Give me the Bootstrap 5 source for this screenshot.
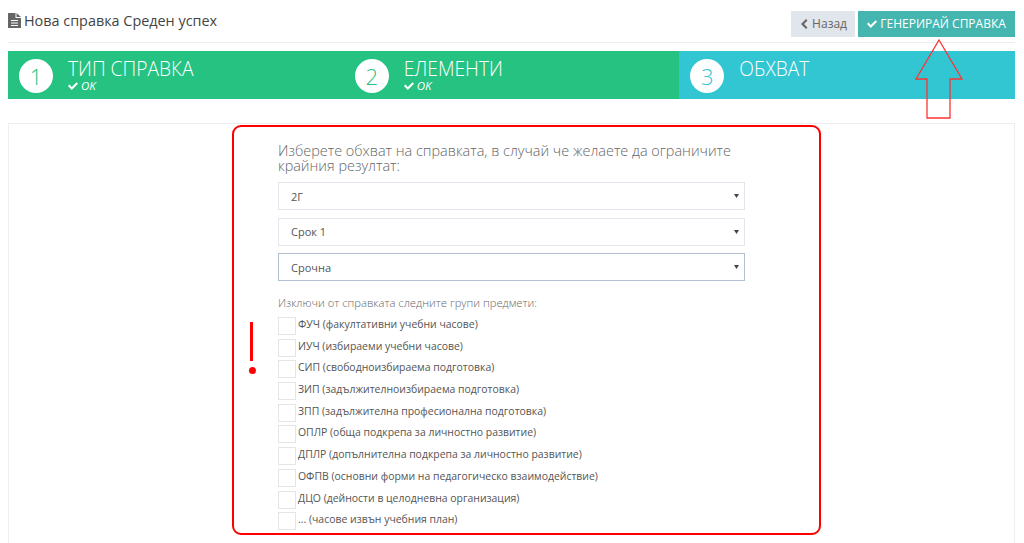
<!DOCTYPE html>
<html lang="bg">
<head>
    <meta charset="UTF-8">
    <meta name="viewport" content="width=device-width, initial-scale=1.0">
    <title>Нова справка</title>
    <link href="https://cdn.jsdelivr.net/npm/bootstrap@5.3.0/dist/css/bootstrap.min.css" rel="stylesheet">
    <style>
        html, body { height: 543px; overflow: hidden; }
        body {
            font-family: "Open Sans", "Noto Sans", sans-serif;
            font-size: 11px;
            color: #555;
            background-color: #fff;
            padding: 0 9px 0 8px;
            position: relative;
        }
        .page-head {
            height: 43px;
            border-bottom: 1px solid #eee;
            padding-top: 11px;
        }
        .page-title {
            font-size: 14.4px;
            font-weight: 400;
            color: #444;
            margin: 0;
            line-height: 20px;
        }
        .page-title svg { width: 13px; height: 15px; fill: #666; margin-right: 3px; vertical-align: -2px; }
        .btn-back, .btn-make {
            border-radius: 0;
            border: 0;
            font-size: 12px;
            height: 26px;
            padding: 0;
            line-height: 26px;
            white-space: nowrap;
        }
        .btn-back { background-color: #e1e5ec; color: #666; width: 64px; margin-right: 3px; }
        .btn-make { background-color: #45b6af; color: #fff; width: 157px; }
        .btn-back svg, .btn-make svg { width: 10px; height: 10px; fill: currentColor; vertical-align: -1px; }
        .steps { margin-top: 8px; height: 48px; color: #fff; }
        .step-item { flex: 1 1 0; background-color: #26c281; padding: 8px 0 0 11px; gap: 15px; }
        .step-item.step-now { background-color: #32c5d2; }
        .step-num {
            width: 34px;
            height: 34px;
            border-radius: 50%;
            background-color: #fff;
            color: #26c281;
            font-size: 22px;
            font-weight: 300;
            line-height: 34px;
            text-align: center;
            flex: none;
        }
        .step-now .step-num { color: #32c5d2; }
        .step-name { font-size: 19.2px; font-weight: 300; line-height: 20px; }
        .step-ok { font-size: 11.5px; font-style: italic; line-height: 11px; padding-top: 1px; }
        .step-ok svg { width: 10px; height: 9px; fill: #fff; vertical-align: -1px; }
        .panel-box {
            margin-top: 24px;
            border: 1px solid #eee;
            height: 600px;
            padding-top: 1px;
        }
        .red-box {
            position: relative;
            width: 589px;
            height: 410px;
            margin-left: 223px;
            border: 2px solid #f00;
            border-radius: 9px;
            padding: 16px 0 0 44px;
        }
        .form-inner { width: 467px; }
        .form-lead {
            font-size: 14.45px;
            font-weight: 300;
            line-height: 15px;
            color: #666;
            margin-bottom: 9px;
        }
        .pick {
            height: 28px;
            border-radius: 0;
            border: 1px solid #e1e5ec;
            font-size: 11px;
            color: #555;
            padding: 2px 12px 0;
            margin-bottom: 7.5px;
            background-size: 5px 4px;
            background-position: right 5px center;
            background-image: url("data:image/svg+xml,%3Csvg xmlns='http://www.w3.org/2000/svg' viewBox='0 0 5 4'%3E%3Cpath fill='%23444' d='M0 0h5L2.500 4z'/%3E%3C/svg%3E");
        }
        .pick.pick-on { border-color: #b3bfd3; }
        .exclude-title { font-size: 11.25px; font-weight: 300; color: #666; margin: 14px 0 6px; line-height: 16px; }
        .ex-row { height: 21.7px; min-height: 0; margin: 0; padding: 0; gap: 2px; align-items: flex-start; }
        .ex-row .form-check-input {
            width: 18px;
            height: 18px;
            border-radius: 0;
            border: 1px solid #e5e5e5;
            margin: 0;
            float: none;
            flex: none;
        }
        .ex-row label { line-height: 15px; color: #555; font-size: 10.45px; }
        .warn-bar { position: absolute; left: 16px; top: 195px; width: 3px; height: 39px; background-color: #f00; }
        .warn-dot { position: absolute; left: 15px; top: 240px; width: 7px; height: 7px; border-radius: 50%; background-color: #f00; }
        .up-arrow { position: absolute; left: 915px; top: 39px; width: 49px; height: 81px; }
    </style>
</head>
<body>

<div class="page-head d-flex justify-content-between align-items-start">
    <h1 class="page-title">
        <svg viewBox="0 0 13 15"><path d="M0 0h7.500v5H13v10H0zM8.500 0L13 4H8.500zM3 7v1h7V7zM3 9.500v1h7v-1zM3 12v1h7v-1z" fill-rule="evenodd"/></svg>Нова справка Среден успех
    </h1>
    <div class="d-flex">
        <button class="btn btn-back"><svg viewBox="0 0 10 10"><path d="M7 0l1.500 1.500L5 5l3.500 3.500L7 10 2 5z"/></svg> Назад</button>
        <button class="btn btn-make"><svg viewBox="0 0 10 10"><path d="M1.400 3.600L3.800 6l4.800-4.700L10 2.700 3.800 8.900 0 5z"/></svg> ГЕНЕРИРАЙ СПРАВКА</button>
    </div>
</div>

<div class="steps d-flex">
    <div class="step-item d-flex">
        <div class="step-num">1</div>
        <div>
            <div class="step-name">ТИП СПРАВКА</div>
            <div class="step-ok"><svg viewBox="0 0 10 9"><path d="M1.400 2.600L3.800 5l4.800-4.700L10 1.700 3.800 7.900 0 4z"/></svg> OK</div>
        </div>
    </div>
    <div class="step-item d-flex">
        <div class="step-num">2</div>
        <div>
            <div class="step-name">ЕЛЕМЕНТИ</div>
            <div class="step-ok"><svg viewBox="0 0 10 9"><path d="M1.400 2.600L3.800 5l4.800-4.700L10 1.700 3.800 7.900 0 4z"/></svg> OK</div>
        </div>
    </div>
    <div class="step-item step-now d-flex">
        <div class="step-num">3</div>
        <div>
            <div class="step-name">ОБХВАТ</div>
        </div>
    </div>
</div>

<div class="panel-box">
    <div class="red-box">
        <div class="form-inner">
            <div class="form-lead">Изберете обхват на справката, в случай че желаете да ограничите крайния резултат:</div>
            <select class="form-select pick"><option>2Г</option></select>
            <select class="form-select pick"><option>Срок 1</option></select>
            <select class="form-select pick pick-on"><option>Срочна</option></select>
            <div class="exclude-title">Изключи от справката следните групи предмети:</div>
            <div class="form-check d-flex ex-row"><input class="form-check-input" type="checkbox" id="g1"><label class="form-check-label" for="g1">ФУЧ (факултативни учебни часове)</label></div>
            <div class="form-check d-flex ex-row"><input class="form-check-input" type="checkbox" id="g2"><label class="form-check-label" for="g2">ИУЧ (избираеми учебни часове)</label></div>
            <div class="form-check d-flex ex-row"><input class="form-check-input" type="checkbox" id="g3"><label class="form-check-label" for="g3">СИП (свободноизбираема подготовка)</label></div>
            <div class="form-check d-flex ex-row"><input class="form-check-input" type="checkbox" id="g4"><label class="form-check-label" for="g4">ЗИП (задължителноизбираема подготовка)</label></div>
            <div class="form-check d-flex ex-row"><input class="form-check-input" type="checkbox" id="g5"><label class="form-check-label" for="g5">ЗПП (задължителна професионална подготовка)</label></div>
            <div class="form-check d-flex ex-row"><input class="form-check-input" type="checkbox" id="g6"><label class="form-check-label" for="g6">ОПЛР (обща подкрепа за личностно развитие)</label></div>
            <div class="form-check d-flex ex-row"><input class="form-check-input" type="checkbox" id="g7"><label class="form-check-label" for="g7">ДПЛР (допълнителна подкрепа за личностно развитие)</label></div>
            <div class="form-check d-flex ex-row"><input class="form-check-input" type="checkbox" id="g8"><label class="form-check-label" for="g8">ОФПВ (основни форми на педагогическо взаимодействие)</label></div>
            <div class="form-check d-flex ex-row"><input class="form-check-input" type="checkbox" id="g9"><label class="form-check-label" for="g9">ДЦО (дейности в целодневна организация)</label></div>
            <div class="form-check d-flex ex-row"><input class="form-check-input" type="checkbox" id="g10"><label class="form-check-label" for="g10">... (часове извън учебния план)</label></div>
        </div>
        <div class="warn-bar"></div>
        <div class="warn-dot"></div>
    </div>
</div>

<!-- червената стрелка лежи върху лентата със стъпките -->
<svg class="up-arrow" viewBox="0 0 49 81"><path d="M24 1L47 40H35V79H12V40H1z" fill="none" stroke="#f33" stroke-width="1.300"/></svg>

<script src="https://cdn.jsdelivr.net/npm/bootstrap@5.3.0/dist/js/bootstrap.bundle.min.js"></script>
</body>
</html>
